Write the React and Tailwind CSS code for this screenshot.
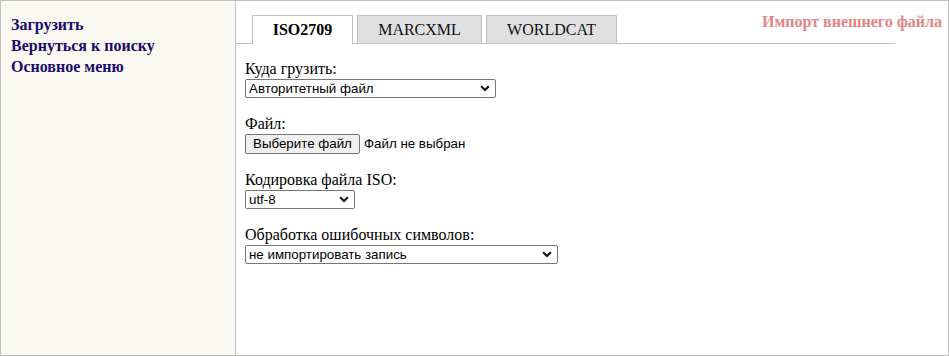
import React from 'react';

const serif = { fontFamily: '"Liberation Serif", "Times New Roman", serif' };
const sans = { fontFamily: '"Liberation Sans", Arial, sans-serif' };

const Chevron = () => (
  <svg width="10" height="7" viewBox="0 0 10 7" className="shrink-0">
    <path d="M1.2 1.2 L5 5 L8.8 1.2" fill="none" stroke="#111" strokeWidth="2.2" />
  </svg>
);

const Select = ({ value, width }) => (
  <div
    className="flex items-center justify-between h-[19px] border border-[#767676] rounded-[2px] bg-white pl-[3px] pr-[5px] text-[13.33px] text-black leading-none"
    style={{ width, ...sans }}
  >
    <span>{value}</span>
    <Chevron />
  </div>
);

const Field = ({ label, children }) => (
  <div className="flex flex-col items-start">
    <div className="text-[16px] leading-[18px] text-black">{label}</div>
    <div className="mt-[1px]">{children}</div>
  </div>
);

export default function App() {
  const tabs = ['MARCXML', 'WORLDCAT'];
  return (
    <div className="w-[949px] h-[356px] border border-[#c0c0c0] flex bg-white" style={serif}>
      <div className="w-[235px] shrink-0 bg-[#f9f9f1] border-r border-[#c0c0c0] pl-[10px] pt-[13px] flex flex-col text-[16px] font-bold text-[#1c0a6e] leading-[21px]">
        <a>Загрузить</a>
        <a>Вернуться к поиску</a>
        <a>Основное меню</a>
      </div>
      <div className="relative flex-1 flex flex-col">
        <div className="absolute right-[6px] top-[9px] text-[16px] font-bold text-[#e08585]">
          Импорт внешнего файла
        </div>
        <div className="mt-[14px] mr-[53px] flex items-end gap-[4px] pl-[16px] border-b border-[#c0c0c0] h-[29px]">
          <div className="w-[101px] h-[29px] -mb-px bg-white border border-b-0 border-[#c0c0c0] flex items-center justify-center font-bold text-[16px] text-black">
            ISO2709
          </div>
          {tabs.map((t, i) => (
            <div
              key={t}
              className={`${i === 0 ? 'w-[125px]' : 'w-[131px]'} h-[28px] bg-[#e0e0e0] border border-b-0 border-[#c0c0c0] flex items-center justify-center text-[16px] text-[#111]`}
            >
              {t}
            </div>
          ))}
        </div>
        <div className="pl-[9px] pt-[16px] flex flex-col gap-[17px]">
          <Field label="Куда грузить:">
            <Select value="Авторитетный файл" width={251} />
          </Field>
          <Field label="Файл:">
            <div className="flex items-center text-[13.33px]" style={sans}>
              <div className="h-[20px] px-[7px] flex items-center border border-[#767676] rounded-[2px] bg-[#efefef] text-black">
                Выберите файл
              </div>
              <span className="ml-[4px] text-black">Файл не выбран</span>
            </div>
          </Field>
          <Field label="Кодировка файла ISO:">
            <Select value="utf-8" width={110} />
          </Field>
          <Field label="Обработка ошибочных символов:">
            <Select value="не импортировать запись" width={313} />
          </Field>
        </div>
      </div>
    </div>
  );
}
